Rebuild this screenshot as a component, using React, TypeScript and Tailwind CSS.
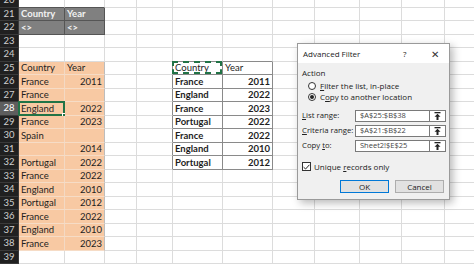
import type { ReactNode } from 'react'

const COLS = [
  'w-[19px]', 'w-[46px]', 'w-[40px]', 'w-[32px]', 'w-[36px]', 'w-[50px]',
  'w-[50px]', 'w-[42px]', 'w-[45px]', 'w-[42px]', 'w-[43px]', 'w-[45px]',
]

const LEFT: Record<number, [string, string]> = {
  21: ['Country', 'Year'],
  22: ['<>', '<>'],
  25: ['Country', 'Year'],
  26: ['France', '2011'],
  27: ['France', ''],
  28: ['England', '2022'],
  29: ['France', '2023'],
  30: ['Spain', ''],
  31: ['', '2014'],
  32: ['Portugal', '2022'],
  33: ['France', '2022'],
  34: ['England', '2010'],
  35: ['Portugal', '2012'],
  36: ['France', '2022'],
  37: ['England', '2010'],
  38: ['France', '2023'],
}

const OUT: Record<number, [string, string]> = {
  25: ['Country', 'Year'],
  26: ['France', '2011'],
  27: ['England', '2022'],
  28: ['France', '2023'],
  29: ['Portugal', '2022'],
  30: ['France', '2022'],
  31: ['England', '2010'],
  32: ['Portugal', '2012'],
}

const ROWS = Array.from({ length: 20 }, (_, i) => 20 + i)

function Cell({ r, c }: { r: number; c: number }) {
  const w = COLS[c]
  if (c === 0) {
    const sel = r === 28
    return (
      <div className={`${w} shrink-0 h-full flex items-center justify-center border-b border-r border-b-[#3a3a3a] border-r-[#3a3a3a] text-[9.5px] ${sel ? 'bg-[#5e5e5e] text-white' : 'bg-[#202020] text-[#cfcfcf]'}`}>
        {r}
      </div>
    )
  }

  let bg = 'bg-white'
  let br = 'border-r-[#dcdcdc]'
  let bb = 'border-b-[#dcdcdc]'
  let text = 'text-[#1e1e1e]'
  let value = ''
  let overlay: ReactNode = null

  const crit = (r === 21 || r === 22) && (c === 1 || c === 2)
  const src = r >= 25 && r <= 38 && (c === 1 || c === 2)
  const out = r >= 25 && r <= 32 && (c === 5 || c === 6)

  if (crit) {
    bg = 'bg-[#808080]'
    br = 'border-r-[#555555]'
    bb = 'border-b-[#555555]'
    text = 'text-[#f2f2f2] font-bold'
    value = LEFT[r][c - 1]
  } else if (src) {
    bg = 'bg-[#f8c9a3]'
    br = c === 1 ? 'border-r-[#f3d9c4]' : 'border-r-[#bdbdbd]'
    bb = 'border-b-[#f6dcc6]'
    value = LEFT[r][c - 1]
    if (r === 28 && c === 1) {
      overlay = (
        <>
          <div className="absolute -left-[1px] -top-[1px] -right-[1px] -bottom-[1px] border-2 border-[#217346]" />
          <div className="absolute -right-[3px] -bottom-[3px] w-[5px] h-[5px] bg-[#217346] border border-white" />
        </>
      )
    }
  } else if (out) {
    br = 'border-r-[#8a8a8a]'
    bb = 'border-b-[#8a8a8a]'
    value = OUT[r][c - 5]
    text = r === 25 ? 'text-[#1e1e1e]' : 'text-[#1e1e1e] font-bold'
    if (r === 25 && c === 5) {
      overlay = <div className="absolute -left-[1px] -top-[1px] right-0 bottom-0 border-2 border-dashed border-[#217346]" />
    }
  }

  const right = /^\d+$/.test(value)

  // dark outline edges for the extracted table
  if (c === 4 && r >= 25 && r <= 32) br = 'border-r-[#8a8a8a]'
  if (r === 24 && (c === 5 || c === 6)) bb = 'border-b-[#8a8a8a]'
  if (r === 20 && (c === 1 || c === 2)) bb = 'border-b-[#555555]'

  return (
    <div className={`${w} shrink-0 h-full relative flex items-center border-b border-r ${br} ${bb} ${bg} ${text} text-[9.5px] px-[2px] ${right ? 'justify-end' : ''}`}>
      <span className="leading-none whitespace-nowrap">{value}</span>
      {overlay}
    </div>
  )
}

function UpBtn() {
  return (
    <div className="w-[16px] h-full border-l border-[#7a7a7a] flex items-center justify-center bg-white">
      <svg width="7" height="8" viewBox="0 0 7 8">
        <rect x="0.5" y="0" width="6" height="1.3" fill="#222" />
        <path d="M3.5 1.8 L6.5 4.8 L4.5 4.8 L4.5 8 L2.5 8 L2.5 4.8 L0.5 4.8 Z" fill="#222" />
      </svg>
    </div>
  )
}

function RangeRow({ label, value }: { label: ReactNode; value: string }) {
  return (
    <div className="flex items-center h-[12px]">
      <div className="w-[53px] text-[#222]">{label}</div>
      <div className="flex-1 h-full flex border border-[#7a7a7a] bg-white">
        <div className="flex-1 flex items-center pl-[4px] text-[#444] text-[7.5px]">{value}</div>
        <UpBtn />
      </div>
    </div>
  )
}

function Dialog() {
  return (
    <div className="absolute left-[297px] top-[43px] w-[153px] h-[157px] border border-[#9a9a9a] bg-[#f0f0f0] shadow-[3px_3px_8px_rgba(0,0,0,0.28)] text-[8px] leading-none" style={{ fontFamily: '"Open Sans", "Noto Sans", sans-serif' }}>
      <div className="h-[19px] bg-white flex items-center pl-[5px] text-[#222]">
        <span className="flex-1">Advanced Filter</span>
        <span className="w-[28px] text-[8px]">?</span>
        <span className="w-[18px] text-[10px] text-[#333]">✕</span>
      </div>
      <div className="pl-[4px] pr-[3px] pt-[6px] flex flex-col">
        <div className="text-[#222]">Action</div>
        <div className="flex items-center gap-[4px] mt-[5px] pl-[6px]">
          <div className="w-[8px] h-[8px] rounded-full border border-[#333] bg-white" />
          <span className="text-[#222]"><u className="underline-offset-1">F</u>ilter the list, in-place</span>
        </div>
        <div className="flex items-center gap-[4px] mt-[3px] pl-[6px]">
          <div className="w-[8px] h-[8px] rounded-full border border-[#333] bg-white flex items-center justify-center">
            <div className="w-[4px] h-[4px] rounded-full bg-[#222]" />
          </div>
          <span className="text-[#222]">C<u className="underline-offset-1">o</u>py to another location</span>
        </div>
        <div className="mt-[9px] flex flex-col gap-[3px] text-[7.75px]">
          <RangeRow label={<><u className="underline-offset-1">L</u>ist range:</>} value="$A$25:$B$38" />
          <RangeRow label={<><u className="underline-offset-1">C</u>riteria range:</>} value="$A$21:$B$22" />
          <RangeRow label={<>Copy <u className="underline-offset-1">t</u>o:</>} value="Sheet2!$E$25" />
        </div>
        <div className="flex items-center gap-[3px] mt-[10px]">
          <div className="w-[9px] h-[9px] border border-[#333] bg-white flex items-center justify-center">
            <svg width="7" height="6" viewBox="0 0 7 6">
              <path d="M0.6 3.2 L2.6 5 L6.4 0.8" stroke="#222" strokeWidth="1" fill="none" />
            </svg>
          </div>
          <span className="text-[#222]">Unique <u className="underline-offset-1">r</u>ecords only</span>
        </div>
        <div className="flex justify-end gap-[6px] mt-[9px] pr-[2px]">
          <div className="w-[49px] h-[13px] border border-[#0078d7] bg-[#e1e1e1] flex items-center justify-center text-[#222]">OK</div>
          <div className="w-[49px] h-[13px] border border-[#adadad] bg-[#e1e1e1] flex items-center justify-center text-[#222]">Cancel</div>
        </div>
      </div>
    </div>
  )
}

export default function App() {
  return (
    <div className="relative w-[474px] h-[264px] overflow-hidden bg-white" style={{ fontFamily: 'Lato, "Liberation Sans", sans-serif' }}>
      <div className="-mt-[6px] flex flex-col">
        {ROWS.map((r) => (
          <div key={r} className="flex h-[13.5px] shrink-0">
            {COLS.map((_, c) => (
              <Cell key={c} r={r} c={c} />
            ))}
          </div>
        ))}
      </div>
      <Dialog />
    </div>
  )
}
